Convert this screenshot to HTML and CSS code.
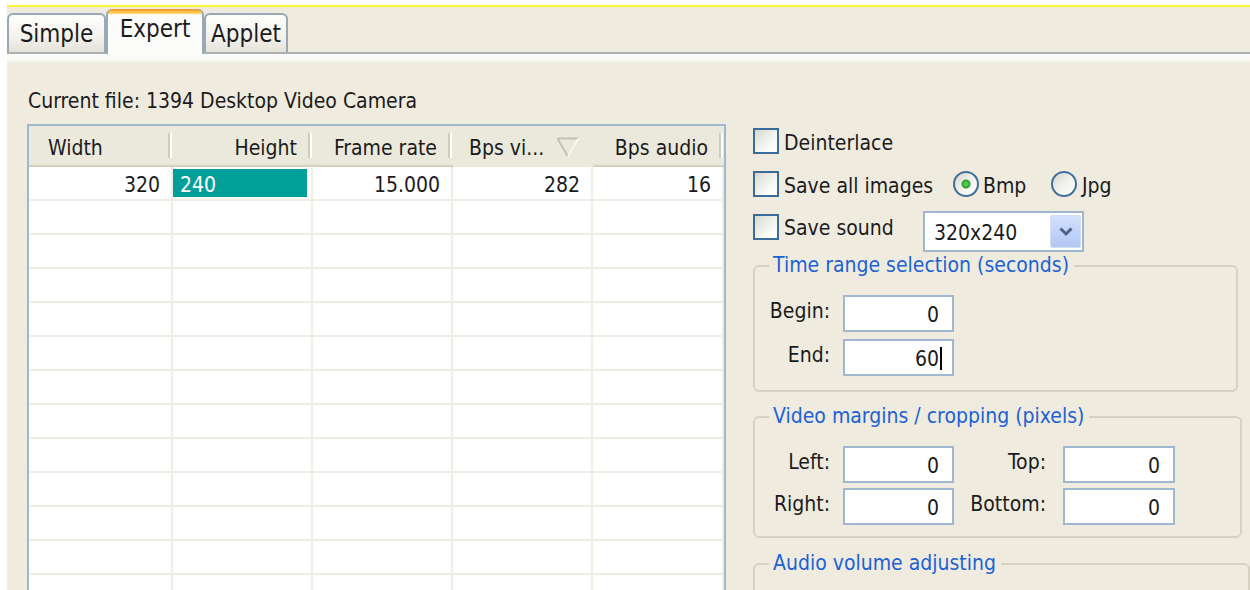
FILE: index.html
```html
<!DOCTYPE html>
<html>
<head>
<meta charset="utf-8">
<title>Capture settings</title>
<link rel="stylesheet" href="styles.css">
</head>
<body>
<div class="window">
  <div class="tabs">
    <div class="tab tab-simple">Simple</div>
    <div class="tab tab-active">Expert</div>
    <div class="tab tab-applet">Applet</div>
  </div>
  <div class="pane">
    <div class="current-file">Current file: 1394 Desktop Video Camera</div>
    <div class="main">
      <div class="list">
        <div class="list-head">
          <div class="hcell hleft">Width</div>
          <div class="hcell">Height</div>
          <div class="hcell">Frame rate</div>
          <div class="hcell hsorted"><span>Bps vi...</span>
            <svg class="sort-arrow" width="24" height="21" viewBox="0 0 24 21">
              <path d="M1.5 1.5 H22.5" stroke="#c4c1b3" stroke-width="2" fill="none"/>
              <path d="M1.5 1.5 L12 19.5" stroke="#c4c1b3" stroke-width="2" fill="none"/>
              <path d="M22.5 1.5 L12 19.5" stroke="#f7f6f1" stroke-width="2" fill="none"/>
            </svg>
          </div>
          <div class="hcell">Bps audio</div>
        </div>
        <div class="list-row">
          <div class="cell">320</div>
          <div class="cell cell-selected"><span class="sel">240</span></div>
          <div class="cell">15.000</div>
          <div class="cell">282</div>
          <div class="cell">16</div>
        </div>
        <div class="list-row"><div class="cell"></div><div class="cell"></div><div class="cell"></div><div class="cell"></div><div class="cell"></div></div>
        <div class="list-row"><div class="cell"></div><div class="cell"></div><div class="cell"></div><div class="cell"></div><div class="cell"></div></div>
        <div class="list-row"><div class="cell"></div><div class="cell"></div><div class="cell"></div><div class="cell"></div><div class="cell"></div></div>
        <div class="list-row"><div class="cell"></div><div class="cell"></div><div class="cell"></div><div class="cell"></div><div class="cell"></div></div>
        <div class="list-row"><div class="cell"></div><div class="cell"></div><div class="cell"></div><div class="cell"></div><div class="cell"></div></div>
        <div class="list-row"><div class="cell"></div><div class="cell"></div><div class="cell"></div><div class="cell"></div><div class="cell"></div></div>
        <div class="list-row"><div class="cell"></div><div class="cell"></div><div class="cell"></div><div class="cell"></div><div class="cell"></div></div>
        <div class="list-row"><div class="cell"></div><div class="cell"></div><div class="cell"></div><div class="cell"></div><div class="cell"></div></div>
        <div class="list-row"><div class="cell"></div><div class="cell"></div><div class="cell"></div><div class="cell"></div><div class="cell"></div></div>
        <div class="list-row"><div class="cell"></div><div class="cell"></div><div class="cell"></div><div class="cell"></div><div class="cell"></div></div>
        <div class="list-row"><div class="cell"></div><div class="cell"></div><div class="cell"></div><div class="cell"></div><div class="cell"></div></div>
        <div class="list-row"><div class="cell"></div><div class="cell"></div><div class="cell"></div><div class="cell"></div><div class="cell"></div></div>
      </div>

      <div class="options">
        <div class="opt-row">
          <span class="check"></span><span class="opt-label">Deinterlace</span>
        </div>
        <div class="opt-row">
          <span class="check"></span><span class="opt-label label-images">Save all images</span>
          <span class="radio radio-on"></span><span class="opt-label radio-label label-bmp">Bmp</span>
          <span class="radio"></span><span class="opt-label radio-label">Jpg</span>
        </div>
        <div class="opt-row opt-row-last">
          <span class="check"></span><span class="opt-label label-sound">Save sound</span>
          <div class="combo">
            <span class="combo-text">320x240</span>
            <span class="combo-btn">
              <svg width="16" height="11" viewBox="0 0 16 11"><path d="M2.5 2.5 L8 8 L13.5 2.5" stroke="#4d6185" stroke-width="3" fill="none"/></svg>
            </span>
          </div>
        </div>

        <fieldset class="group group-time">
          <legend>Time range selection (seconds)</legend>
          <div class="fields fields-time">
            <label>Begin:</label><div class="field">0</div>
            <label>End:</label><div class="field field-caret">60<span class="caret"></span></div>
          </div>
        </fieldset>

        <fieldset class="group group-margins">
          <legend>Video margins / cropping (pixels)</legend>
          <div class="fields fields-margins">
            <label>Left:</label><div class="field">0</div>
            <label class="label-wide">Top:</label><div class="field">0</div>
            <label>Right:</label><div class="field">0</div>
            <label class="label-wide">Bottom:</label><div class="field">0</div>
          </div>
        </fieldset>

        <fieldset class="group group-audio">
          <legend>Audio volume adjusting</legend>
          <div class="audio-body"></div>
        </fieldset>
      </div>
    </div>
  </div>
</div>
</body>
</html>
```

FILE: styles.css
```css
* {
  box-sizing: border-box;
}

html,
body {
  margin: 0;
  padding: 0;
}

body {
  width: 1250px;
  height: 590px;
  overflow: hidden;
  background: #ffffff;
  font-family: "DejaVu Sans Condensed", "DejaVu Sans", sans-serif;
  font-size: 21px;
  line-height: 25px;
  color: #1b1b1b;
}

/* dialog surface */
.window {
  margin: 5px 0 0 7px;
  height: 585px;
  border-top: 2px solid #fdf52f;
  background: #efebdf;
  overflow: hidden;
}

/* tab strip */
.tabs {
  display: flex;
  align-items: flex-end;
  height: 47px;
  border-bottom: 2px solid #aab0ad;
}

.tab {
  display: flex;
  justify-content: center;
  align-items: center;
  height: 39px;
  padding-top: 1px;
  border: 2px solid #98a8b5;
  border-bottom: none;
  border-radius: 6px 6px 0 0;
  background: linear-gradient(#fdfdfb, #f4f3ee 55%, #e4e2d9);
  font-size: 24px;
}

.tab-simple {
  width: 99px;
}

.tab-applet {
  width: 84px;
}

.tab-active {
  width: 98px;
  height: 45px;
  margin-bottom: -2px;
  padding-top: 0;
  padding-bottom: 4px;
  border-top: none;
  background: linear-gradient(#e3962f 0, #f4b33c 2px, #ffcc55 4px, #fde7a6 5px, #fcfcfb 6px, #fcfcfb);
}

/* tab page */
.pane {
  height: 540px;
  padding: 35px 0 0 20px;
  background: linear-gradient(#fcfcfb 0, #f9f8f5 6px, #efebdf 10px, #efebdf);
}

.current-file {
  padding-left: 1px;
}

.main {
  display: flex;
  align-items: flex-start;
  gap: 27px;
  margin-top: 10px;
}

/* list view */
.list {
  flex: none;
  width: 699px;
  height: 470px;
  border: 2px solid #9fb7d1;
  border-bottom: none;
  background: #ffffff;
  overflow: hidden;
}

.list-head,
.list-row {
  display: grid;
  grid-template-columns: 144px 140px 140px 140px 131px;
}

.list-head {
  height: 41px;
}

.hcell {
  display: flex;
  justify-content: flex-end;
  align-items: flex-start;
  padding: 10px 16px 0 0;
  background:
    linear-gradient(#ffffff, #ffffff) no-repeat right 1px top 7px / 2px 25px,
    linear-gradient(#cfccbe, #cfccbe) no-repeat right 3px top 7px / 2px 25px,
    linear-gradient(to top, #c9c5b6 0, #d5d1c1 1px, #e1ddcc 2px, rgba(235, 233, 220, 0) 3px),
    #ebe9dc;
}

.hleft {
  justify-content: flex-start;
  padding: 10px 0 0 19px;
}

.hsorted {
  justify-content: flex-start;
  padding: 10px 13px 0 16px;
  background: #ebe9dc;
}

.sort-arrow {
  margin-left: auto;
  margin-top: 1px;
}

.cell {
  height: 34px;
  padding: 6px 11px 0 0;
  text-align: right;
  border-right: 2px solid #f0eee4;
  border-bottom: 2px solid #f0eee4;
}

.cell-selected {
  padding: 0;
  text-align: left;
}

.sel {
  display: block;
  height: 28px;
  margin: 2px 4px 0 0;
  padding: 4px 0 0 7px;
  background: #019f98;
  color: #ffffff;
}

/* options column */
.options {
  flex: none;
  display: flex;
  flex-direction: column;
  align-items: flex-start;
  width: 497px;
  padding-top: 4px;
}

.opt-row {
  display: flex;
  align-items: center;
  height: 26px;
  margin-bottom: 17px;
}

.opt-row-last {
  margin-bottom: 0;
}

.check {
  flex: none;
  width: 26px;
  height: 26px;
  margin-right: 5px;
  border: 2px solid #3b6b99;
  background: linear-gradient(135deg, #d9d8d0 0, #efefea 45%, #fbfbf9 75%, #ffffff);
}

.opt-label {
  flex: none;
  padding-top: 4px;
}

.label-images {
  width: 169px;
}

.label-sound {
  width: 139px;
  padding-top: 2px;
}

.radio {
  flex: none;
  width: 26px;
  height: 26px;
  border-radius: 50%;
  border: 2px solid #416f9c;
  background: linear-gradient(135deg, #d6d5cd 0, #efefea 45%, #ffffff);
}

.radio-on {
  background:
    radial-gradient(circle, #6ad86a 0, #33b233 3px, #2a9e2a 4px, rgba(42, 158, 42, 0) 5px),
    linear-gradient(135deg, #d6d5cd 0, #efefea 45%, #ffffff);
}

.radio-label {
  margin-left: 5px;
}

.label-bmp {
  width: 68px;
  margin-left: 4px;
}

.combo {
  flex: none;
  align-self: flex-start;
  display: flex;
  align-items: flex-start;
  width: 161px;
  height: 41px;
  margin-top: -3px;
  border: 2px solid #9fb7d1;
  background: #ffffff;
}

.combo-text {
  padding: 8px 0 0 9px;
}

.combo-btn {
  display: flex;
  justify-content: center;
  align-items: center;
  width: 31px;
  height: 33px;
  margin: 2px 1px 0 auto;
  border: 1px solid #d2ddf7;
  border-radius: 2px;
  background: linear-gradient(#d3e0fc, #bfd1f7 60%, #b3c7f2);
}

/* group boxes */
.group {
  margin: 13px 0 0;
  padding: 0;
  min-width: 0;
  border: 2px solid #d5d2c3;
  border-radius: 6px;
}

.group legend {
  margin-left: 14px;
  padding: 0 5px 0 4px;
  color: #1d62d4;
}

.group-time {
  width: 485px;
}

.group-margins {
  width: 489px;
  margin-top: 12px;
}

.group-audio {
  width: 497px;
  margin-top: 13px;
}

.fields {
  display: grid;
  align-items: start;
}

.fields label {
  padding: 4px 13px 0 0;
  text-align: right;
}

.fields-time {
  grid-template-columns: 88px 111px;
  row-gap: 7px;
  padding: 17px 0 14px;
}

.fields-margins {
  grid-template-columns: 88px 111px 109px 112px;
  row-gap: 5px;
  padding: 17px 0 11px;
}

.fields-margins .label-wide {
  padding-right: 17px;
}

.field {
  height: 37px;
  padding: 3px 13px 0 0;
  line-height: 31px;
  text-align: right;
  border: 2px solid #9fb7d1;
  background: #ffffff;
}

.field-caret {
  padding-right: 10px;
}

.caret {
  display: inline-block;
  width: 2px;
  height: 23px;
  margin-left: 1px;
  vertical-align: -4px;
  background: #000000;
}

.audio-body {
  height: 80px;
}
```
